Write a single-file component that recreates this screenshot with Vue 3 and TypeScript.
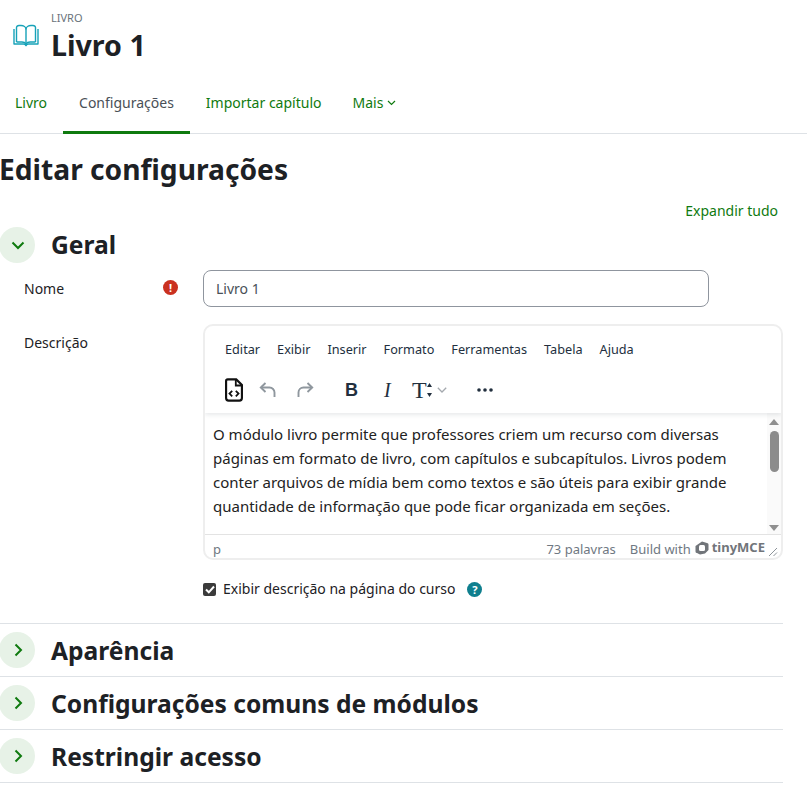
<script setup lang="ts">
const tabs = [
  { label: 'Livro', active: false },
  { label: 'Configurações', active: true },
  { label: 'Importar capítulo', active: false },
]
const menus = ['Editar', 'Exibir', 'Inserir', 'Formato', 'Ferramentas', 'Tabela', 'Ajuda']
const collapsed = ['Aparência', 'Configurações comuns de módulos', 'Restringir acesso']
</script>

<template>
  <div class="page">
    <header class="page-head">
      <svg class="book" width="26" height="24" viewBox="0 0 26 24" fill="none" stroke="#17a2b8" stroke-width="1.4" stroke-linejoin="round">
        <path d="M1 5v15h9.500c1 0 2 .6 2.500 1.600.5-1 1.500-1.600 2.500-1.600H25V5" />
        <path d="M3.500 18V3.500C3.500 2.500 4.500 1.500 6 1.500h2c2.500 0 5 1.500 5 4v15" />
        <path d="M22.500 18V3.500c0-1-1-2-2.500-2h-2c-2.500 0-5 1.500-5 4" />
        <path d="M3.500 18H9c1.800 0 3.200.8 4 2 .8-1.200 2.200-2 4-2h5.500" />
      </svg>
      <div class="head-text">
        <div class="kicker">LIVRO</div>
        <h1>Livro 1</h1>
      </div>
    </header>

    <nav class="tabs">
      <a v-for="t in tabs" :key="t.label" class="tab" :class="{ active: t.active }">{{ t.label }}</a>
      <a class="tab">Mais
        <svg class="mais-caret" width="9" height="6" viewBox="0 0 9 6" fill="none" stroke="currentColor" stroke-width="1.200"><path d="M1 1l3.500 3.500L8 1" /></svg>
      </a>
    </nav>

    <h2 class="form-title">Editar configurações</h2>
    <div class="expand-row"><a>Expandir tudo</a></div>

    <section class="geral">
      <div class="sec-head">
        <span class="toggle">
          <svg width="14" height="9" viewBox="0 0 14 9" fill="none" stroke="#0f7a0f" stroke-width="2"><path d="M1.500 1.500L7 7l5.500-5.500" /></svg>
        </span>
        <h3>Geral</h3>
      </div>

      <div class="field name-field">
        <label>Nome</label>
        <span class="req">!</span>
        <div class="input">Livro 1</div>
      </div>

      <div class="field desc-field">
        <label>Descrição</label>
        <div class="editor">
          <div class="editor-top">
            <div class="menubar">
              <span v-for="m in menus" :key="m">{{ m }}</span>
            </div>
            <div class="toolbar">
              <svg class="tool-code" width="18" height="24" viewBox="0 0 20 26" fill="none">
                <path d="M3 1.200h9.500L18.800 7.500V22a2.800 2.800 0 0 1-2.800 2.800H4A2.800 2.800 0 0 1 1.200 22V3A1.800 1.800 0 0 1 3 1.200z" stroke="#111" stroke-width="2.400" />
                <path d="M12 1.500V8h6.500" stroke="#111" stroke-width="2" />
                <path d="M8 14l-3 3 3 3M12 14l3 3-3 3" stroke="#111" stroke-width="2" />
              </svg>
              <svg class="tool-undo" width="18" height="16" viewBox="0 0 18 16" fill="none" stroke="#8f979e" stroke-width="1.900">
                <path d="M6.500 1L1.800 5.500 6.500 10" /><path d="M2 5.500h8.500a5 5 0 0 1 5 5V15" />
              </svg>
              <svg class="tool-redo" width="18" height="16" viewBox="0 0 18 16" fill="none" stroke="#8f979e" stroke-width="1.900">
                <path d="M11.500 1l4.700 4.500L11.500 10" /><path d="M16 5.500H7.500a5 5 0 0 0-5 5V15" />
              </svg>
              <span class="tool-b">B</span>
              <span class="tool-i">I</span>
              <span class="tool-t">T</span>
              <svg class="tool-arrows" width="5" height="14" viewBox="0 0 5 14" fill="#222f3e"><path d="M2.500 0L5 4H0zM2.500 14L0 10h5z" /></svg>
              <svg class="tool-caret" width="10" height="6" viewBox="0 0 10 6" fill="none" stroke="#a4a9ae" stroke-width="1.300"><path d="M.8.8L5 5l4.200-4.200" /></svg>
              <svg class="tool-more" width="16" height="4" viewBox="0 0 16 4" fill="#222f3e"><circle cx="2" cy="2" r="1.800" /><circle cx="8" cy="2" r="1.800" /><circle cx="14" cy="2" r="1.800" /></svg>
            </div>
          </div>
          <div class="editor-body">
            <p>O módulo livro permite que professores criem um recurso com diversas páginas em formato de livro, com capítulos e subcapítulos. Livros podem conter arquivos de mídia bem como textos e são úteis para exibir grande quantidade de informação que pode ficar organizada em seções.</p>
            <div class="scrollbar">
              <i class="arrow up"></i>
              <i class="thumb"></i>
              <i class="arrow down"></i>
            </div>
          </div>
          <div class="statusbar">
            <span class="path">p</span>
            <span class="words">73 palavras</span>
            <span class="build">Build with</span>
            <svg class="tiny-logo" width="14" height="14" viewBox="0 0 14 14">
              <path d="M7 .5L12 2a1.500 1.500 0 0 1 1.500 1.500V9L10 12.500 5 13.500 2 12A1.500 1.500 0 0 1 .5 10.500V5z" fill="#71757a" />
              <rect x="4" y="4" width="6" height="6" rx="1.500" fill="#fff" />
            </svg>
            <span class="brand">tinyMCE</span>
            <svg class="grip" width="10" height="10" viewBox="0 0 10 10" stroke="#8d949a" stroke-width="1"><path d="M1 9l8-8M5.500 9L9 5.500" /></svg>
          </div>
        </div>
      </div>

      <div class="check-row">
        <span class="box">
          <svg width="10" height="9" viewBox="0 0 10 9" fill="none" stroke="#fff" stroke-width="2"><path d="M1 4.500L3.800 7.300 9 1.500" /></svg>
        </span>
        <span class="check-label">Exibir descrição na página do curso</span>
        <span class="help">?</span>
      </div>
    </section>

    <section v-for="c in collapsed" :key="c" class="closed">
      <span class="toggle">
        <svg width="9" height="14" viewBox="0 0 9 14" fill="none" stroke="#0f7a0f" stroke-width="2"><path d="M1.500 1.500L7 7l-5.500 5.500" /></svg>
      </span>
      <h3>{{ c }}</h3>
    </section>
  </div>
</template>

<style>
html, body {
  margin: 0;
  background: #fff;
}
</style>

<style scoped>
.page {
  width: 807px;
  height: 787px;
  overflow: hidden;
  font-family: "Noto Sans", "Open Sans", sans-serif;
  font-size: 14px;
  color: #1d2125;
}

.page-head {
  display: flex;
  height: 71px;
  padding: 10px 0 0 13px;
  box-sizing: border-box;
}

.book {
  margin-top: 14px;
  margin-right: 12px;
}

.kicker {
  font-size: 11px;
  line-height: 15px;
  margin-bottom: 2px;
  color: #6a737b;
}

h1 {
  margin: 0;
  font-size: 28.600px;
  line-height: 36px;
  font-weight: 700;
}

.tabs {
  display: flex;
  height: 62px;
  border-bottom: 1px solid #dee2e6;
}

.tab {
  display: flex;
  align-items: center;
  gap: 4px;
  height: 62px;
  padding: 0 16px;
  box-sizing: border-box;
  color: #0f7a0f;
}

.tab:first-child {
  padding-left: 15px;
}

.tab:nth-child(3) {
  padding-right: 15px;
}

.mais-caret {
  margin-top: 2px;
}

.tab.active {
  color: #495057;
  border-bottom: 3px solid #0f7a0f;
  padding-top: 3px;
  margin-bottom: -1px;
  height: 63px;
}

.form-title {
  margin: 17px 0 0 -1px;
  font-size: 28.200px;
  line-height: 36px;
  font-weight: 700;
}

.expand-row {
  display: flex;
  justify-content: flex-end;
  padding: 14px 29px 0 0;
  line-height: 20px;
  color: #0f7a0f;
}

.sec-head,
.closed {
  display: flex;
  align-items: center;
  gap: 16px;
}

.sec-head {
  margin-top: 6px;
}

.closed h3 {
  margin-top: 2px;
}

.toggle {
  display: flex;
  align-items: center;
  justify-content: center;
  width: 36px;
  height: 36px;
  margin-left: -1px;
  padding-left: 2px;
  box-sizing: border-box;
  border-radius: 50%;
  background: #e7f2e7;
  flex: none;
}

h3 {
  margin: 0;
  font-size: 24.600px;
  line-height: 36px;
  font-weight: 700;
}

.field {
  display: flex;
  padding-left: 24px;
}

.field label {
  line-height: 20px;
  width: 139px;
  flex: none;
}

.name-field {
  margin-top: 7px;
  align-items: flex-start;
}

.name-field label {
  padding-top: 9px;
}

.req {
  width: 15px;
  height: 15px;
  margin-top: 10px;
  margin-right: 25px;
  flex: none;
  border-radius: 50%;
  background: #ca3120;
  color: #fff;
  font-size: 11px;
  font-weight: 700;
  line-height: 15px;
  text-align: center;
}

.input {
  width: 506px;
  height: 37px;
  box-sizing: border-box;
  border: 1px solid #8f959e;
  border-radius: 8px;
  padding: 0 12px;
  line-height: 35px;
  color: #495057;
}

.desc-field {
  margin-top: 17px;
}

.desc-field label {
  width: 179px;
  padding-top: 9px;
}

.editor {
  width: 580px;
  height: 236px;
  box-sizing: border-box;
  border: 2px solid #eeeeee;
  border-radius: 10px;
  overflow: hidden;
  display: flex;
  flex-direction: column;
}

.editor-top {
  height: 87px;
  flex: none;
  box-sizing: border-box;
  padding-top: 13px;
  box-shadow: 0 2px 4px rgba(34, 47, 62, 0.1);
  position: relative;
}

.menubar {
  display: flex;
  gap: 17px;
  padding-left: 20px;
  font-size: 12.700px;
  line-height: 20px;
  color: #222f3e;
}

.toolbar {
  display: flex;
  align-items: center;
  height: 34px;
  margin-top: 14px;
  padding-left: 20px;
  color: #222f3e;
}

.tool-undo {
  margin-left: 16px;
}

.tool-redo {
  margin-left: 19px;
}

.tool-b {
  margin-left: 31px;
  width: 16px;
  font: 700 18px/1 "Liberation Sans", sans-serif;
}

.tool-i {
  margin-left: 23px;
  width: 10px;
  font: italic 20px/1 "Liberation Serif", serif;
}

.tool-t {
  margin-left: 18px;
  font: 24px/1 "Liberation Serif", serif;
}

.tool-arrows {
  margin-left: 0;
}

.tool-caret {
  margin-left: 5px;
}

.tool-more {
  margin-left: 30px;
}

.editor-body {
  flex: 1;
  min-height: 0;
  display: flex;
  justify-content: space-between;
  background: #fff;
}

.editor-body p {
  margin: 9px 0 0 8px;
  width: 548px;
  line-height: 24px;
  font-size: 15px;
  color: #222;
}

.scrollbar {
  width: 14px;
  background: #fafafa;
  display: flex;
  flex-direction: column;
  align-items: center;
  padding: 6px 0 3px;
  box-sizing: border-box;
}

.scrollbar i {
  display: block;
}

.arrow {
  width: 0;
  height: 0;
  border-left: 5px solid transparent;
  border-right: 5px solid transparent;
}

.arrow.up {
  border-bottom: 6px solid #8f8f8f;
}

.arrow.down {
  border-top: 6px solid #8f8f8f;
  margin-top: auto;
}

.thumb {
  width: 9px;
  height: 41px;
  margin-top: 6px;
  border-radius: 5px;
  background: #8c8c8c;
}

.statusbar {
  height: 24px;
  flex: none;
  display: flex;
  align-items: flex-start;
  box-sizing: border-box;
  border-top: 1px solid #e3e3e3;
  padding: 4px 3px 0 8px;
  font-size: 13px;
  line-height: 20px;
  color: #6f7882;
  overflow: hidden;
}

.words {
  margin-left: auto;
}

.build {
  margin-left: 14px;
}

.tiny-logo {
  margin: 2px 0 0 4px;
}

.brand {
  margin-left: 3px;
  font-weight: 700;
  font-size: 13px;
  line-height: 17px;
  color: #71757a;
}

.grip {
  margin: 8px 0 0 3px;
}

.check-row {
  display: flex;
  align-items: center;
  margin: 19px 0 0 203px;
  line-height: 20px;
  height: 20px;
}

.box {
  width: 13px;
  height: 13px;
  border-radius: 2px;
  background: #3b3b3b;
  display: flex;
  align-items: center;
  justify-content: center;
}

.check-label {
  margin-left: 7px;
  font-size: 14px;
}

.help {
  width: 15px;
  height: 15px;
  margin-left: 12px;
  border-radius: 50%;
  background: #0f7f8e;
  color: #fff;
  font-size: 11px;
  font-weight: 700;
  line-height: 15px;
  text-align: center;
}

.geral {
  height: 397px;
  width: 783px;
  box-sizing: border-box;
  border-bottom: 1px solid #dee2e6;
}

.closed {
  width: 783px;
  height: 53px;
  box-sizing: border-box;
  border-bottom: 1px solid #dee2e6;
}
</style>
